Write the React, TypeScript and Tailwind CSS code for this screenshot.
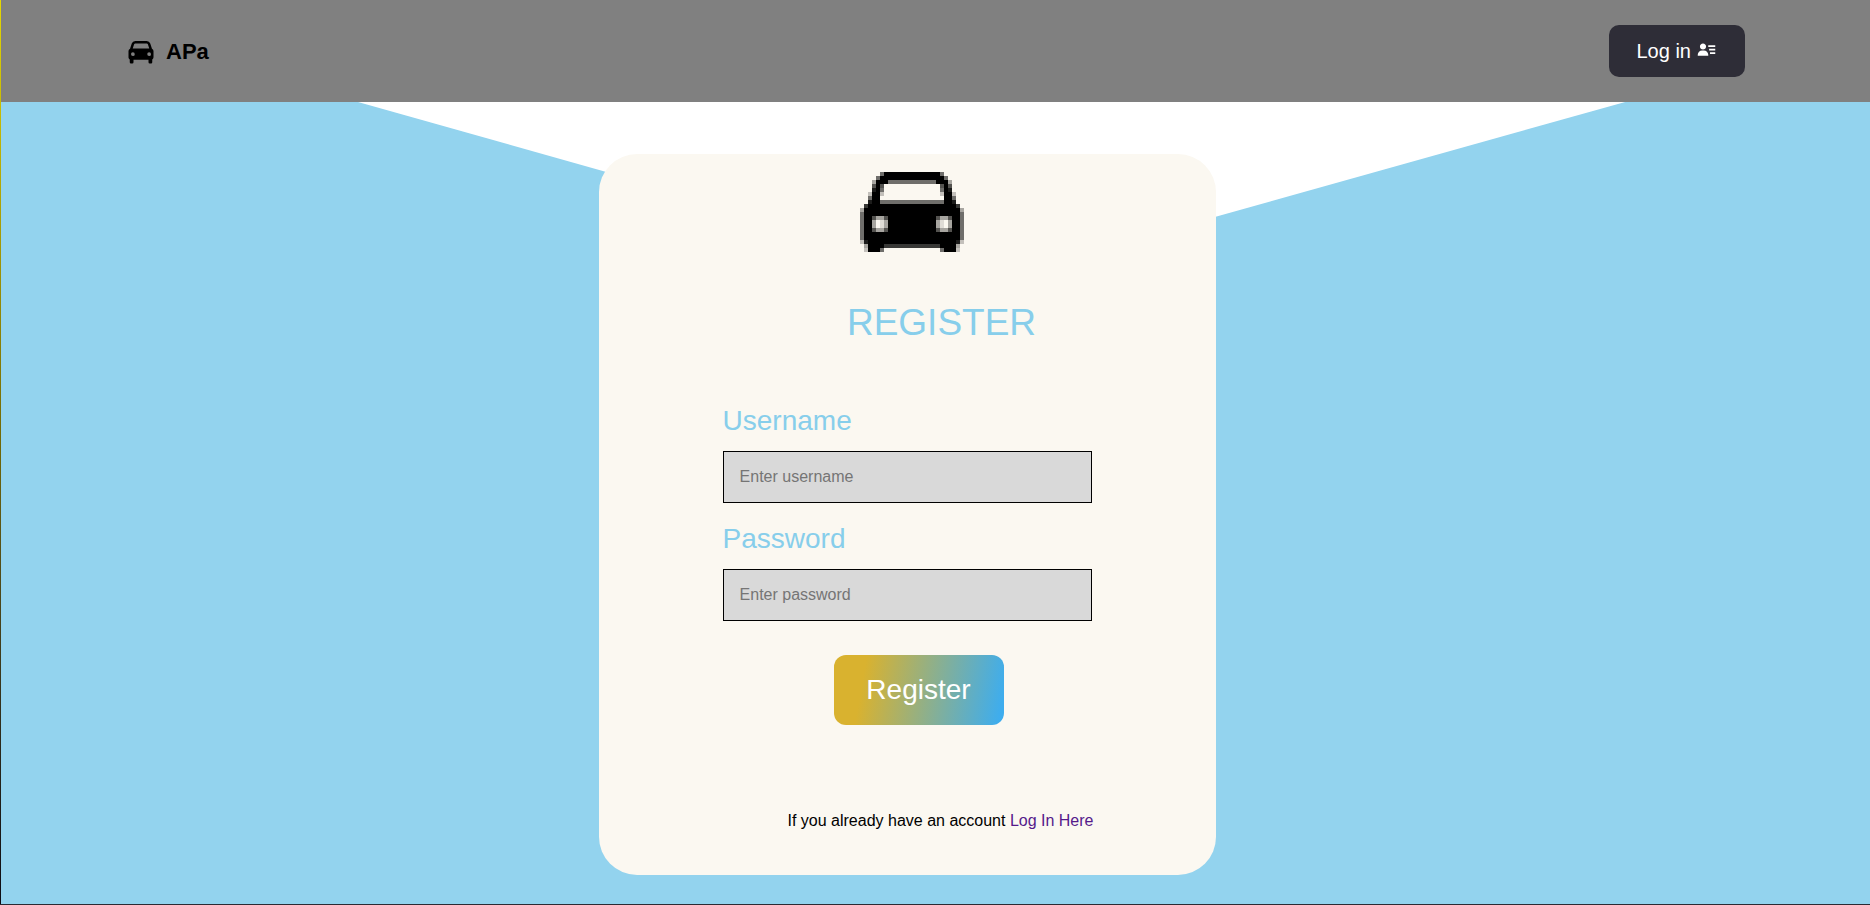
import React from "react";
import { BiSolidCar, BiSolidUserDetail } from "react-icons/bi";

// Left half of the car emblem; each digit is the darkness of one cell (0-9).
const CAR_ROWS = [
  "0000059999999",
  "0000599999999",
  "0003999555555",
  "0006960000000",
  "0008950000000",
  "0029920000000",
  "0059900000000",
  "0089955555555",
  "0799999999999",
  "3999999999999",
  "5999999999999",
  "5996336999999",
  "5993013999999",
  "5993013999999",
  "5996336999999",
  "5999999999999",
  "5999999999999",
  "2899999999999",
  "0399997777777",
  "0299950000000",
];

function CarEmblem() {
  return (
    <svg
      viewBox="0 0 26 20"
      className="h-20 w-[104px]"
      shapeRendering="crispEdges"
      aria-hidden="true"
    >
      {CAR_ROWS.flatMap((row, y) =>
        (row + row.split("").reverse().join(""))
          .split("")
          .map((cell, x) =>
            cell === "0" ? null : (
              <rect key={`${x}-${y}`} x={x} y={y} width="1" height="1" fillOpacity={Number(cell) / 9} />
            ),
          ),
      )}
    </svg>
  );
}

type FieldProps = { id: string; label: string; type: string; placeholder: string };

function Field({ id, label, type, placeholder }: FieldProps) {
  return (
    <div className="flex flex-col gap-[13px]">
      <label htmlFor={id} className="text-[28px] leading-[34px] text-[#87ceeb]">
        {label}
      </label>
      <input
        id={id}
        type={type}
        placeholder={placeholder}
        className="h-[52px] w-full border border-black bg-[#d9d9d9] px-4 text-base text-black placeholder:text-[#757575]"
      />
    </div>
  );
}

export default function App() {
  return (
    <div className="flex min-h-screen flex-col border-b border-[#2b2a33] bg-white font-['Liberation_Sans',Arial,sans-serif]">
      <div className="flex flex-1">
        <div className="w-px shrink-0 bg-linear-to-b from-[#e6d800] via-[#6e6606] to-[#0d0c14]" />
        <div className="flex min-w-0 flex-1 flex-col">
          <header className="flex items-center justify-between bg-[#808080] px-[125px] py-[25px]">
            <a href="#" className="flex items-center gap-[10px] text-[22px] font-bold text-black">
              <BiSolidCar className="size-[30px]" />
              APa
            </a>
            <button
              type="button"
              className="flex h-[52px] items-center gap-[5px] rounded-[10px] bg-[#2e2d37] px-7 text-xl text-white"
            >
              Log in
              <BiSolidUserDetail className="mb-1 size-[21px]" />
            </button>
          </header>

          <main className="relative flex flex-1 flex-col items-center bg-[#93d3ee] pt-[52px] pr-14 pb-[29px]">
            <div className="absolute inset-x-0 top-0 h-[178px] bg-white [clip-path:polygon(19.1%_0,86.9%_0,52.9%_100%)]" />
            <section className="relative flex w-[34%] min-w-[560px] flex-col rounded-[38px] bg-[#fbf8f1] pt-[18px] pb-[42px]">
              <div className="flex justify-center pl-2">
                <CarEmblem />
              </div>
              <h1 className="mt-[49px] pl-[68px] text-center text-[37px] leading-[44px] text-[#87ceeb]">REGISTER</h1>
              <form className="mx-[20%] mt-[59px] flex flex-col" onSubmit={(e) => e.preventDefault()}>
                <div className="flex flex-col gap-[19px]">
                  <Field id="username" label="Username" type="text" placeholder="Enter username" />
                  <Field id="password" label="Password" type="password" placeholder="Enter password" />
                </div>
                <div className="mt-[34px] flex justify-center pl-[22px]">
                  <button
                    type="submit"
                    className="h-[70px] w-[170px] rounded-xl bg-[linear-gradient(100deg,#d9b22f_18%,#3eadee_97%)] text-[28px] text-white"
                  >
                    Register
                  </button>
                </div>
              </form>
              <p className="mt-[84px] pl-[66px] text-center text-base text-black">
                If you already have an account{" "}
                <a href="#" className="text-[#551a8b]">
                  Log In Here
                </a>
              </p>
            </section>
          </main>
        </div>
      </div>
    </div>
  );
}
